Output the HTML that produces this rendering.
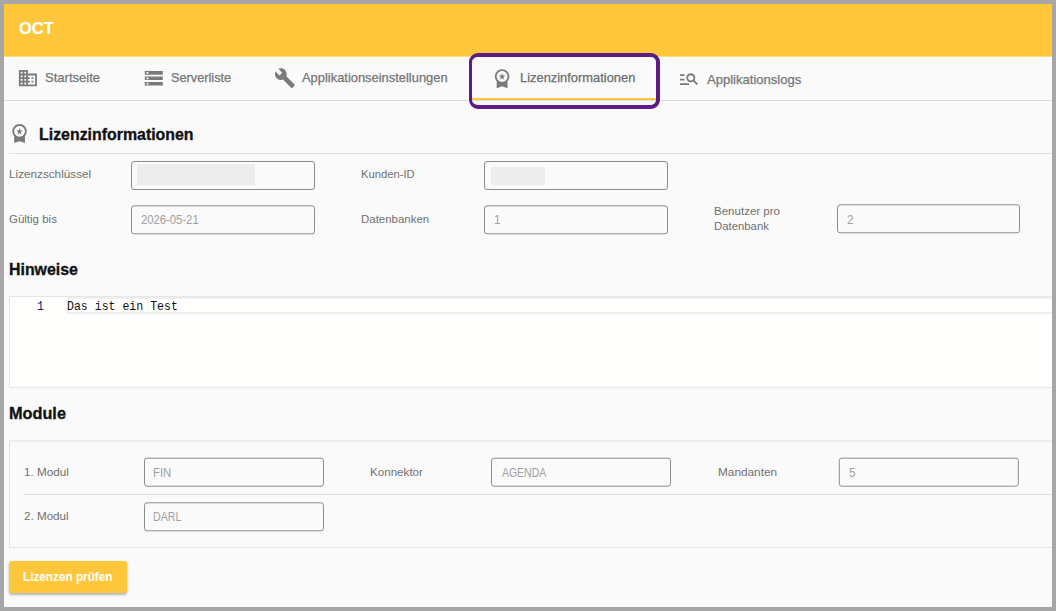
<!DOCTYPE html>
<html lang="de">
<head>
<meta charset="utf-8">
<title>OCT - Lizenzinformationen</title>
<style>
html,body{margin:0;padding:0;}
body{width:1056px;height:611px;overflow:hidden;background:#a6a6a6;font-family:"Liberation Sans",sans-serif;}
#app{position:absolute;left:4px;top:4px;width:1048px;height:603px;background:#fafafa;overflow:hidden;}
.abs{position:absolute;white-space:nowrap;line-height:1;transform-origin:0 0;transform:scaleX(var(--k,1));}
#bar{position:absolute;left:0;top:0;width:1048px;height:52px;background:#fec63a;border-bottom:1px solid #fcdb87;}
#title{font-size:17.2px;font-weight:bold;color:#fff;-webkit-text-stroke:0.15px #fff;}
#tabs{position:absolute;left:0;top:53px;width:1048px;height:43px;border-bottom:1px solid #dcdcdc;}
.tab{font-size:12.6px;color:#757575;-webkit-text-stroke:0.25px #757575;}
.tab.act{color:#6c6c6c;-webkit-text-stroke:0.25px #6c6c6c;}
#focus{position:absolute;left:465px;top:49px;width:184px;height:48px;border:solid #5c1b87;border-width:4px 4px 4px 3px;border-radius:9px;box-sizing:content-box;}
#ink{position:absolute;left:468px;top:94px;width:185px;height:2px;background:#fec63a;}
.h{font-size:17px;font-weight:bold;color:#111;-webkit-text-stroke:0.35px #111;}
.hr{position:absolute;height:1px;background:#e0e0e0;}
.lbl{font-size:11.7px;color:#707070;}
.val{font-size:12.4px;color:#a0a0a0;}
.btx{font-size:12.9px;font-weight:bold;color:#fff;}
.inp{position:absolute;box-sizing:border-box;height:29px;border:1px solid #8c8c8c;border-radius:3px;background:#fafafa;}
.blur{position:absolute;background:#ededed;}
#editor{position:absolute;left:5px;top:292px;width:1060px;height:92px;background:#fffffe;border:1px solid #e6e6e6;box-sizing:border-box;}
#curline{position:absolute;left:57px;top:0;width:1000px;height:17px;border:2px solid #eeeeee;border-right:none;box-sizing:border-box;}
.mono{font-family:"Liberation Mono","DejaVu Sans Mono",monospace;font-size:12.6px;--k:.917;}
#modbox{position:absolute;left:5px;top:436px;width:1060px;height:108px;border:1px solid #e3e3e3;border-top:2px solid #ececec;box-sizing:border-box;}
#btn{position:absolute;left:5px;top:557px;width:118px;height:32px;background:#fec63a;border-radius:3px;box-shadow:0 2px 2px rgba(0,0,0,.2),0 1px 4px rgba(0,0,0,.12);}
#icons{position:absolute;left:0;top:0;}
</style>
</head>
<body>
<div id="app">
  <header>
    <div id="bar"></div>
      <div class="abs" id="title" style="left:14.79px;top:16.44px;--k:0.9568">OCT</div>
  </header>

  <nav>
    <div id="tabs"></div>
  <svg id="icons" width="1048" height="160" viewBox="0 0 1048 160" fill="#7a7a7a" fill-rule="evenodd">
    <path transform="translate(13.1 63.3) scale(.9)" d="M12 7V3H2v18h20V7H12zM6 19H4v-2h2v2zm0-4H4v-2h2v2zm0-4H4V9h2v2zm0-4H4V5h2v2zm4 12H8v-2h2v2zm0-4H8v-2h2v2zm0-4H8V9h2v2zm0-4H8V5h2v2zm10 12h-8v-2h2v-2h-2v-2h2v-2h-2V9h8v10zm-2-8h-2v2h2v-2zm0 4h-2v2h2v-2z"/>
    <path transform="translate(139.0 63.5) scale(.9)" d="M2 20h20v-4H2v4zm2-3h2v2H4v-2zM2 4v4h20V4H2zm4 3H4V5h2v2zm-4 7h20v-4H2v4zm2-3h2v2H4v-2z"/>
    <path transform="translate(270.1 63.3) scale(.9)" d="M22.7 19l-9.1-9.1c.9-2.3.4-5-1.500-6.900-2-2-5-2.400-7.400-1.300L9 6 6 9 1.600 4.700C.4 7.100.9 10.100 2.900 12.100c1.900 1.900 4.600 2.400 6.900 1.500l9.100 9.100c.4.400 1 .400 1.400 0l2.300-2.300c.5-.4.500-1.100.1-1.400z"/>
    <path transform="translate(487.3 63.45) scale(.9)" d="M9.68 13.69L12 11.93l2.310 1.760-.88-2.850L15.750 9h-2.840L12 6.190 11.090 9H8.250l2.310 1.840-.88 2.850zM20 10c0-4.420-3.580-8-8-8s-8 3.580-8 8c0 2.030.76 3.870 2 5.280V23l6-2 6 2v-7.720c1.240-1.410 2-3.250 2-5.280zm-8-6c3.310 0 6 2.690 6 6s-2.690 6-6 6-6-2.690-6-6 2.690-6 6-6z"/>
    <path transform="translate(674.2 63.95) scale(.9)" d="M7 9H2V7h5v2zm0 3H2v2h5v-2zm13.590 7l-3.830-3.830c-.8.520-1.740.830-2.760.830-2.760 0-5-2.240-5-5s2.240-5 5-5 5 2.240 5 5c0 1.020-.31 1.960-.83 2.750L22 17.590 20.590 19zM17 11c0-1.650-1.350-3-3-3s-3 1.350-3 3 1.350 3 3 3 3-1.350 3-3zM2 19h10v-2H2v2z"/>
    <path transform="translate(4.75 118.3) scale(.9)" d="M9.68 13.69L12 11.93l2.310 1.760-.88-2.850L15.750 9h-2.840L12 6.190 11.090 9H8.250l2.310 1.840-.88 2.850zM20 10c0-4.420-3.580-8-8-8s-8 3.580-8 8c0 2.030.76 3.870 2 5.280V23l6-2 6 2v-7.720c1.240-1.410 2-3.250 2-5.280zm-8-6c3.310 0 6 2.690 6 6s-2.690 6-6 6-6-2.690-6-6 2.690-6 6-6z"/>
  </svg>
      <div class="abs tab" id="t1" style="left:40.83px;top:68.33px;--k:1.0342">Startseite</div>
      <div class="abs tab" id="t2" style="left:166.59px;top:68.33px;--k:1.0118">Serverliste</div>
      <div class="abs tab" id="t3" style="left:298.40px;top:68.33px;--k:1.0245">Applikationseinstellungen</div>
      <div class="abs tab act" id="t4" style="left:515.58px;top:68.33px;--k:1.0229">Lizenzinformationen</div>
      <div class="abs tab" id="t5" style="left:703.40px;top:70.33px;--k:1.0353">Applikationslogs</div>
    <div id="ink"></div>
    <div id="focus"></div>
  </nav>

  <main>
    <section>
      <div class="abs h" id="h1" style="left:35.11px;top:121.61px;--k:0.9352">Lizenzinformationen</div>
      <div class="hr" style="left:5px;top:149px;width:1043px"></div>

      <div class="abs lbl" id="l1" style="left:4.95px;top:164.10px;--k:1.0032">Lizenzschlüssel</div>
      <div class="inp" style="left:127px;top:157px;width:184px"></div>
      <div class="blur" style="left:133px;top:160px;width:118px;height:21px"></div>
      <div class="abs lbl" id="l3" style="left:357.29px;top:164.10px;--k:0.9608">Kunden-ID</div>
      <div class="inp" style="left:480px;top:157px;width:184px"></div>
      <div class="blur" style="left:487px;top:163px;width:54px;height:18px"></div>

      <div class="abs lbl" id="l2" style="left:4.96px;top:209.10px;--k:0.9828">Gültig bis</div>
      <div class="inp" style="left:127px;top:201px;width:184px;transform:translateY(.3px)"></div>
      <div class="abs val" id="v1" style="left:136.85px;top:209.50px;--k:0.9095">2026-05-21</div>
      <div class="abs lbl" id="l4" style="left:357.27px;top:209.10px;--k:0.9809">Datenbanken</div>
      <div class="inp" style="left:480px;top:201px;width:184px;transform:translateY(.3px)"></div>
      <div class="abs val" id="v2" style="left:490.34px;top:209.50px;--k:0.9500">1</div>
      <div class="abs lbl" id="l5" style="left:709.96px;top:201.10px;--k:0.9865">Benutzer pro</div>
      <div class="abs lbl" id="l6" style="left:709.98px;top:216.10px;--k:0.9714">Datenbank</div>
      <div class="inp" style="left:833px;top:200px;width:183px;transform:translateY(.3px)"></div>
      <div class="abs val" id="v3" style="left:842.63px;top:209.50px;--k:0.9500">2</div>
    </section>

    <section>
      <div class="abs h" id="h2" style="left:5.31px;top:256.61px;--k:0.9348">Hinweise</div>
      <div id="editor">
        <div id="curline"></div>
        <div class="abs mono" style="left:26.6px;top:3.7px;color:#0b216f">1</div>
        <div class="abs mono" style="left:57.2px;top:3.7px;color:#111">Das ist ein Test</div>
      </div>
    </section>

    <section>
      <div class="abs h" id="h3" style="left:5.28px;top:400.61px;--k:0.9568">Module</div>
      <div id="modbox"></div>
      <div class="abs lbl" id="l7" style="left:19.65px;top:462.10px;--k:1.0029">1. Modul</div>
      <div class="inp" style="left:140px;top:454px;width:180px;transform:translateY(-.3px)"></div>
      <div class="abs val" id="v4" style="left:149.38px;top:462.50px;--k:0.9182">FIN</div>
      <div class="abs lbl" id="l8" style="left:366.26px;top:462.10px;--k:0.9935">Konnektor</div>
      <div class="inp" style="left:487px;top:454px;width:180px;transform:translateY(-.3px)"></div>
      <div class="abs val" id="v5" style="left:497.60px;top:462.50px;--k:0.8444">AGENDA</div>
      <div class="abs lbl" id="l9" style="left:714.24px;top:462.10px;--k:1.0099">Mandanten</div>
      <div class="inp" style="left:835px;top:454px;width:180px;transform:translate(-.2px,-.3px)"></div>
      <div class="abs val" id="v6" style="left:844.77px;top:462.50px;--k:0.9500">5</div>
      <div class="hr" style="left:19px;top:490px;width:1030px"></div>
      <div class="abs lbl" id="l10" style="left:19.95px;top:506.10px;--k:0.9960">2. Modul</div>
      <div class="inp" style="left:140px;top:498px;width:180px;transform:translateY(.3px)"></div>
      <div class="abs val" id="v7" style="left:149.14px;top:506.50px;--k:0.8554">DARL</div>
    </section>

    <div id="btn"></div>
      <div class="abs btx" id="bt" style="left:19.27px;top:567.08px;--k:0.9116">Lizenzen prüfen</div>
  </main>
</div>
</body>
</html>
